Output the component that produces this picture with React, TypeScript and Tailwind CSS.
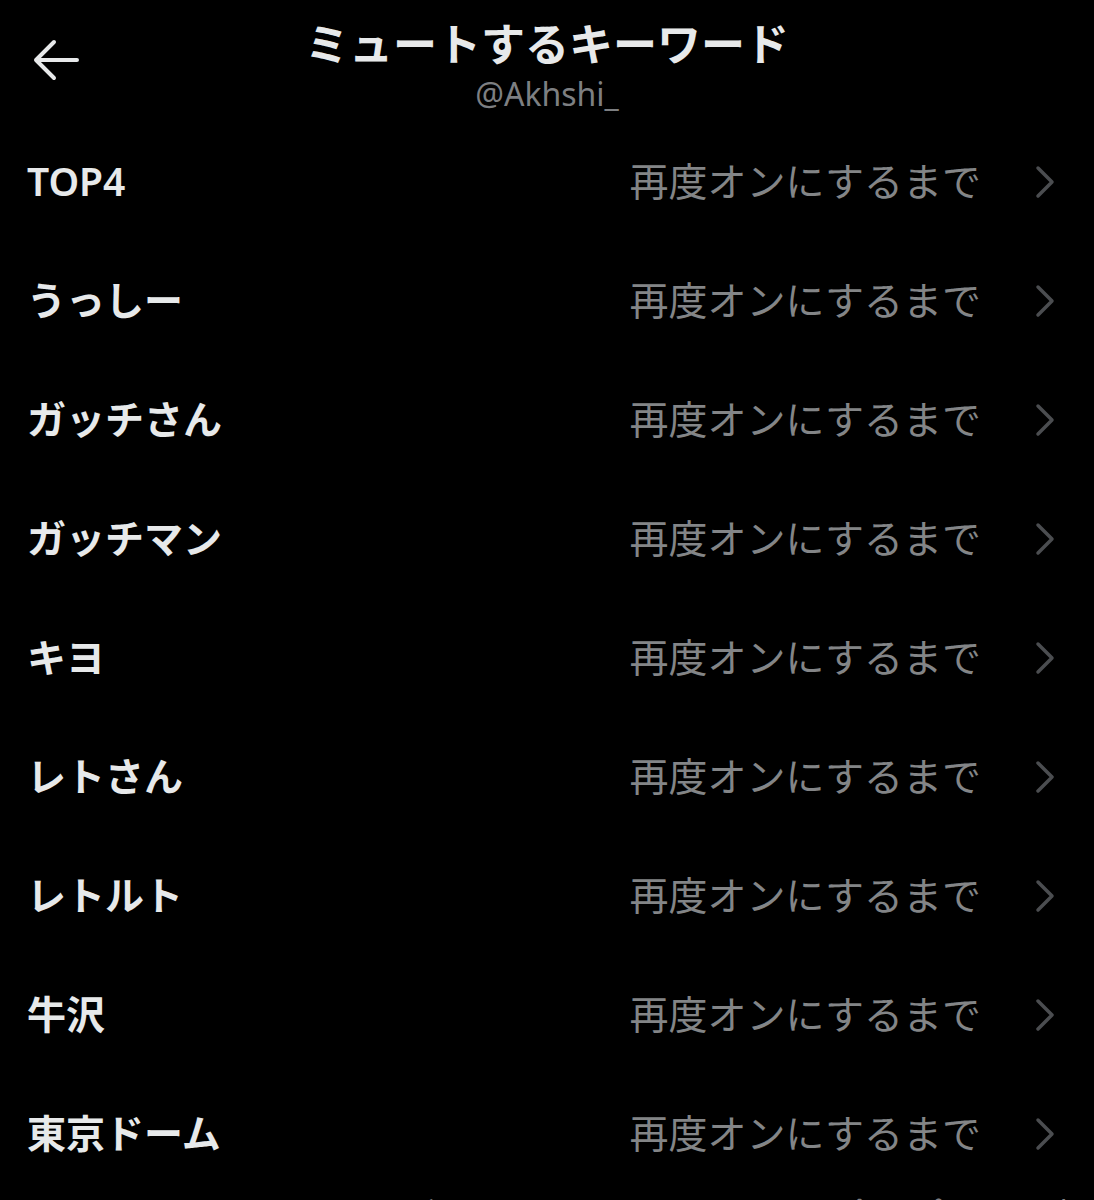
const keywords = [
  "TOP4",
  "うっしー",
  "ガッチさん",
  "ガッチマン",
  "キヨ",
  "レトさん",
  "レトルト",
  "牛沢",
  "東京ドーム",
];

const font = { fontFamily: '"Noto Sans", "Noto Sans CJK JP", sans-serif' };

const App = () => {
  return (
    <div className="min-h-[1200px] w-full bg-black overflow-hidden" style={font}>
      {/* Header */}
      <div className="relative flex flex-col items-center pt-[18px] pb-[10px]">
        <button className="absolute left-[30px] top-[38px] text-[#e7e9ea]">
          <svg width="50" height="44" viewBox="0 0 50 44" fill="none">
            <path
              d="M47 22H6M24 4L6 22L24 40"
              stroke="currentColor"
              strokeWidth="4"
              strokeLinecap="round"
              strokeLinejoin="round"
            />
          </svg>
        </button>
        <h1 className="text-[44px] leading-[52px] font-bold text-[#e7e9ea]">
          ミュートするキーワード
        </h1>
        <p className="mt-[6px] text-[32px] leading-[36px] text-[#7d7f82]">@Akhshi_</p>
      </div>

      {/* Keyword list */}
      <ul>
        {keywords.map((word) => (
          <li key={word} className="flex h-[119px] items-center pl-[27px] pr-[37px]">
            <span className="flex-1 text-[39px] font-semibold text-[#e7e9ea]">{word}</span>
            <span className="text-[39px] text-[#838587]">再度オンにするまで</span>
            <svg className="ml-[52px] text-[#4b4d50]" width="24" height="36" viewBox="0 0 24 36" fill="none">
              <path
                d="M5 4L19 18L5 32"
                stroke="currentColor"
                strokeWidth="3.5"
                strokeLinecap="round"
                strokeLinejoin="round"
              />
            </svg>
          </li>
        ))}
      </ul>

      {/* Footer note (cut off at the bottom of the screen) */}
      <p className="px-[28px] pt-[2px] text-[34px] leading-[40px] text-[#7d7f82] whitespace-nowrap">
        キーワードやハッシュタグをミュートすると、それを含むポストは表示されなくなります。
      </p>
    </div>
  );
};

export default App;
